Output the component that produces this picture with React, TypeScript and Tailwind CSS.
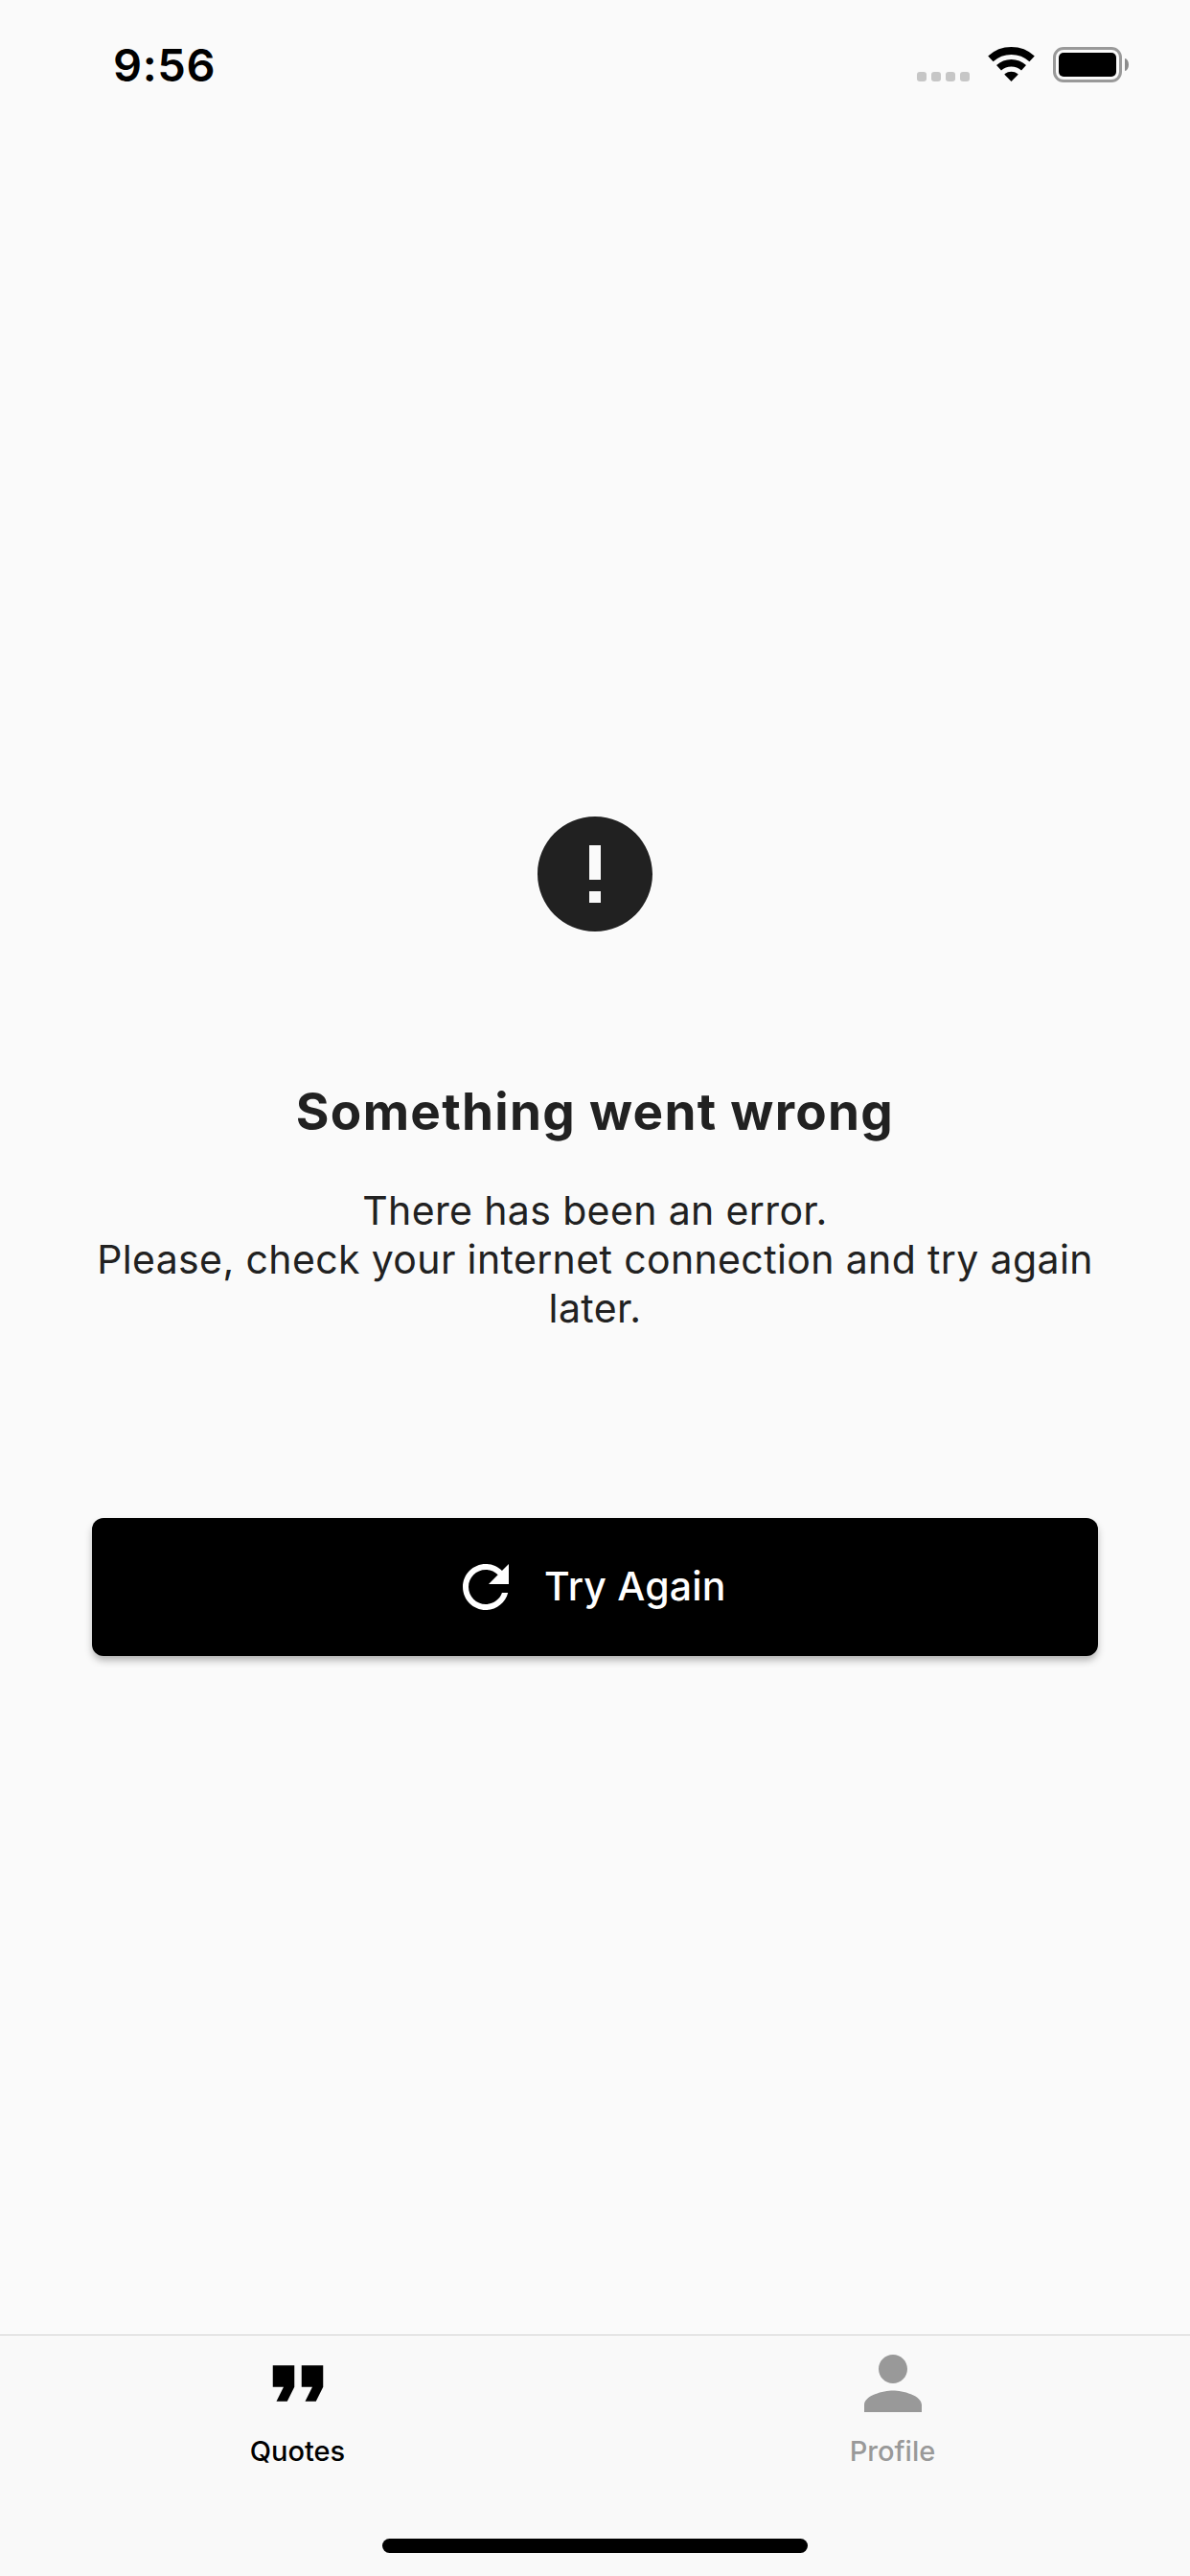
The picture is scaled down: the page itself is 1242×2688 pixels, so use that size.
type TabProps = { label: string; path: string; active?: boolean };

function StatusBar() {
  return (
    <header className="flex h-[132px] items-start justify-between pt-10 pr-[64px] pl-[118px]">
      <span className="text-[47px] leading-[56px] font-semibold tracking-[0.6px] text-black">9:56</span>
      <div className="flex items-start pt-[9px]">
        <div className="mt-[26px] flex gap-[5px]">
          <span className="size-[10px] rounded-[3px] bg-[#c6c6c6]" />
          <span className="size-[10px] rounded-[3px] bg-[#c6c6c6]" />
          <span className="size-[10px] rounded-[3px] bg-[#c6c6c6]" />
          <span className="size-[10px] rounded-[3px] bg-[#c6c6c6]" />
        </div>
        <svg className="ml-[19px] h-[37px] w-[49px]" viewBox="0 0 49 37" fill="none" stroke="black">
          <path d="M2.9 12.4A32 32 0 0 1 46.1 12.4" strokeWidth="8" />
          <path d="M11.5 21.8A19.3 19.3 0 0 1 37.5 21.8" strokeWidth="7.4" />
          <path d="M24.5 36L17.6 29.1Q17.2 28.5 17.8 28A10.7 10.7 0 0 1 31.2 28Q31.8 28.5 31.4 29.1Z" fill="black" stroke="none" />
        </svg>
        <div className="ml-[19px] flex h-[37px] w-[72px] rounded-[11px] border-[3px] border-[#999999] p-[3px]">
          <div className="flex-1 rounded-[5px] bg-black" />
        </div>
        <span className="mt-[12px] ml-[3px] h-[13px] w-[4px] bg-[#8c8c8c] [border-radius:0_4px_4px_0/0_6.5px_6.5px_0]" />
      </div>
    </header>
  );
}

function Tab({ label, path, active = false }: TabProps) {
  return (
    <button className={`flex flex-1 flex-col items-center gap-2 pt-[5px] ${active ? "text-black" : "text-[#999999]"}`}>
      <svg className="size-[90px]" viewBox="0 0 24 24" fill="currentColor">
        <path d={path} />
      </svg>
      <span className="text-[29px] leading-[36px] font-medium">{label}</span>
    </button>
  );
}

export default function App() {
  return (
    <div className="flex h-[2688px] w-[1242px] flex-col bg-[#fafafa] font-['Inter',sans-serif] text-[#212121]">
      <StatusBar />
      <main className="flex flex-1 flex-col items-center px-24 pt-[708px] text-center">
        <svg className="size-36 shrink-0" viewBox="0 0 24 24" fill="currentColor">
          <path d="M12 2C6.48 2 2 6.48 2 12s4.480 10 10 10 10-4.480 10-10S17.520 2 12 2zm1 15h-2v-2h2v2zm0-4h-2V7h2v6z" />
        </svg>
        <h1 className="mt-36 text-[53px] leading-[64px] font-bold tracking-[1.3px]">Something went wrong</h1>
        <p className="mt-[46px] text-[41px] leading-[51px] tracking-[0.37px]">
          There has been an error.
          <br />
          Please, check your internet connection and try again later.
        </p>
        <button className="mt-[193px] flex h-36 w-full items-center gap-[25px] rounded-[12px] bg-black pl-[375px] text-white shadow-[0_5px_8px_-1px_rgba(0,0,0,0.32)]">
          <svg className="size-[72px]" viewBox="0 0 24 24" fill="currentColor">
            <path d="M17.65 6.35C16.2 4.9 14.21 4 12 4c-4.42 0-7.99 3.58-7.99 8s3.57 8 7.99 8c3.73 0 6.84-2.55 7.73-6h-2.08c-.82 2.33-3.04 4-5.65 4-3.31 0-6-2.69-6-6s2.69-6 6-6c1.66 0 3.14.69 4.22 1.78L13 11h7V4l-2.35 2.35z" />
          </svg>
          <span className="pb-[2px] text-[41px] leading-[50px] font-medium tracking-[0.2px]">Try Again</span>
        </button>
      </main>
      <footer className="flex h-[252px] flex-col items-center justify-between border-t border-[#cfcfcf] bg-[#f9f9f9] pb-6">
        <nav className="flex w-full">
          <Tab label="Quotes" active path="M6 17h3l2-4V7H5v6h3zm8 0h3l2-4V7h-6v6h3z" />
          <Tab label="Profile" path="M12 12c2.210 0 4-1.790 4-4s-1.790-4-4-4-4 1.790-4 4 1.790 4 4 4zm0 2c-2.670 0-8 1.340-8 4v2h16v-2c0-2.660-5.330-4-8-4z" />
        </nav>
        <div className="h-[15px] w-[444px] rounded-full bg-black" />
      </footer>
    </div>
  );
}
